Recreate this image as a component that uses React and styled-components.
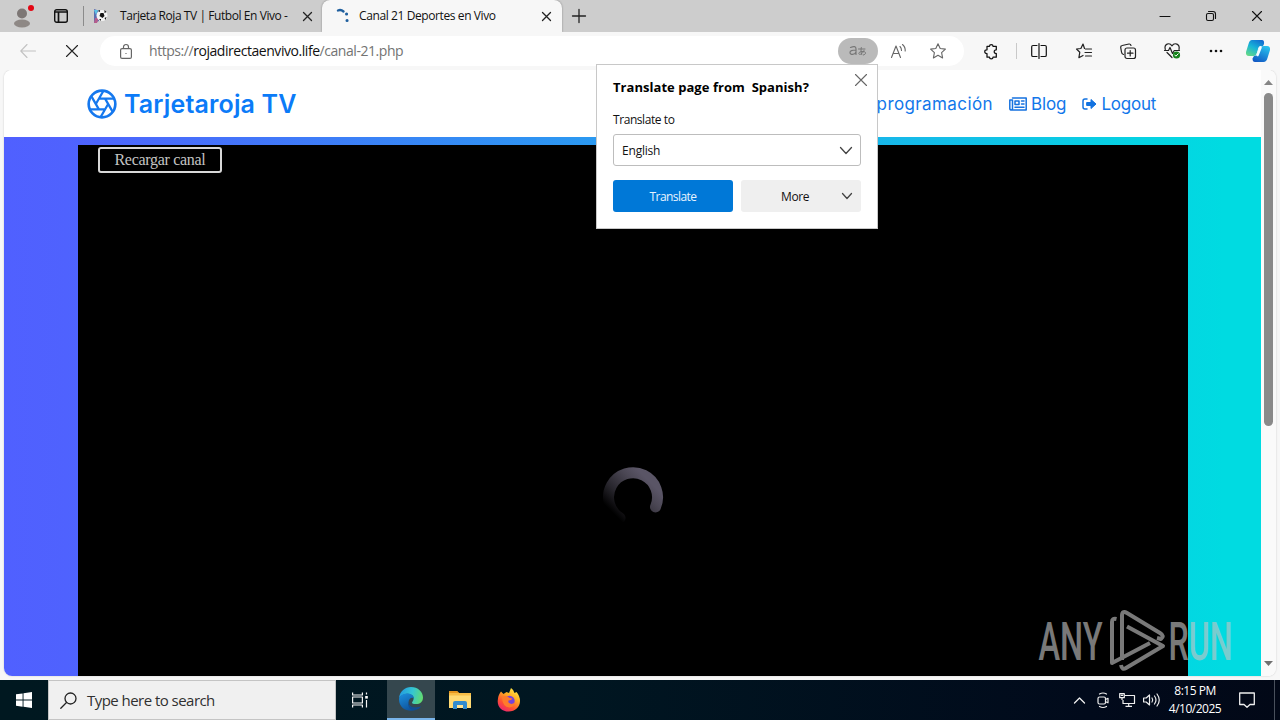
import React from 'react';
import styled, { createGlobalStyle } from 'styled-components';

const GlobalStyle = createGlobalStyle`
  * { box-sizing: border-box; }
  body {
    margin: 0;
    overflow: hidden;
    background: #f7f7f7;
    font-family: "Open Sans", "Noto Sans", sans-serif;
  }
  svg { display: block; flex: none; overflow: visible; }
`;

const Screen = styled.div`
  position: relative;
  width: 1280px;
  height: 720px;
  display: flex;
  flex-direction: column;
  overflow: hidden;
`;

/* Tab strip */

const TabStrip = styled.div`
  height: 32px;
  flex: none;
  display: flex;
  background: #cdcdcd;
`;

const StripCell = styled.div`
  width: ${props => props.$w}px;
  display: flex;
  align-items: center;
  justify-content: center;
`;

const AccountCell = styled(StripCell)`
  padding-top: 2px;
`;

const StripDivider = styled.div`
  width: 1px;
  height: 20px;
  margin: 6px 0 0 4px;
  background: #8b8b8b;
`;

const Tab = styled.div`
  width: ${props => props.$w}px;
  height: 32px;
  padding: 0 ${props => props.$right}px 0 ${props => props.$left}px;
  display: flex;
  align-items: center;
  background: ${props => (props.$active ? '#f7f7f7' : 'transparent')};
  border-radius: 8px 8px 0 0;
  box-shadow: ${props => (props.$active ? '0 0 2px rgba(0,0,0,0.4)' : 'none')};
`;

const TabTitle = styled.div`
  flex: 1;
  margin-left: ${props => props.$gap}px;
  font-size: 12px;
  line-height: 32px;
  letter-spacing: ${props => props.$spacing}px;
  color: #111;
  white-space: nowrap;
`;

const WindowControls = styled.div`
  margin-left: auto;
  display: flex;
`;

/* Toolbar */

const Toolbar = styled.div`
  position: relative;
  height: 38px;
  flex: none;
  display: flex;
  align-items: center;
  padding-left: 6px;
  background: #f7f7f7;
`;

const ToolSlot = styled.div`
  width: ${props => props.$w || 44}px;
  height: 30px;
  margin-left: ${props => props.$gap || 0}px;
  display: flex;
  align-items: center;
  justify-content: center;
`;

const ToolDivider = styled.div`
  width: 1px;
  height: 16px;
  margin-left: 3px;
  background: #c9c9c9;
`;

const AddressBar = styled.div`
  width: 864px;
  height: 30px;
  margin: 0 5px 0 6px;
  padding: 0 6px 0 18px;
  display: flex;
  align-items: center;
  background: #fff;
  border-radius: 15px;
`;

const Url = styled.div`
  flex: 1;
  margin-left: 15px;
  font-size: 14px;
  line-height: 28px;
  letter-spacing: -0.45px;
  color: #737373;
  white-space: nowrap;
  span { color: #111; }
`;

const TranslateBadge = styled.div`
  width: 40px;
  height: 26px;
  display: flex;
  align-items: center;
  justify-content: center;
  border-radius: 13px;
  background: #bababa;
`;

/* Page */

const Frame = styled.div`
  width: 1272px;
  height: 606px;
  flex: none;
  margin: 0 4px 4px;
  display: flex;
  border-radius: 8px;
  overflow: hidden;
  background: #fff;
  box-shadow: 0 0 2px rgba(0,0,0,0.2);
`;

const Site = styled.div`
  width: 1257px;
  display: flex;
  flex-direction: column;
`;

const SiteHeader = styled.header`
  height: 67px;
  flex: none;
  display: flex;
  align-items: center;
  padding: 0 105px 0 82px;
  background: #fff;
  color: #0b7bf8;
  font-family: Inter, "Open Sans", sans-serif;
`;

const Brand = styled.div`
  margin-left: 6px;
  font-size: 25px;
  line-height: 30px;
  font-weight: 600;
  letter-spacing: 0.15px;
  white-space: nowrap;
`;

const Nav = styled.nav`
  margin-left: auto;
  display: flex;
  align-items: center;
`;

const NavLink = styled.div`
  display: flex;
  align-items: center;
  gap: 4px;
  margin-left: 16px;
  font-size: 17px;
  letter-spacing: ${props => props.$spacing}px;
  color: #1277ea;
  white-space: nowrap;
`;

const Stage = styled.main`
  flex: 1;
  display: flex;
  padding: 8px 73px 0 74px;
  background: linear-gradient(90deg, #5060ff 0%, #4f62fe 5%, #00dbe1 97%);
`;

const Player = styled.div`
  position: relative;
  flex: 1;
  background: #000;
`;

const ReloadButton = styled.div`
  width: 124px;
  height: 26px;
  margin: 2px 0 0 20px;
  border: 2px solid #d8d8d8;
  border-radius: 3px;
  text-align: center;
  font-family: "Liberation Serif", serif;
  font-size: 16px;
  line-height: 22px;
  letter-spacing: -0.3px;
  color: #c4c4c4;
`;

const Loader = styled.div`
  position: absolute;
  left: 525px;
  top: 322px;
`;

const Scrollbar = styled.div`
  width: 15px;
  display: flex;
  flex-direction: column;
  align-items: center;
  padding: 9px 0;
  background: #fafafa;
`;

const Thumb = styled.div`
  width: 9px;
  height: 333px;
  margin: 7px 0 auto;
  border-radius: 5px;
  background: #8a8a8a;
`;

/* Translate popup */

const Popup = styled.div`
  position: absolute;
  left: 596px;
  top: 64px;
  width: 282px;
  height: 165px;
  padding: 15px 16px 16px;
  border: 1px solid #c8c8c8;
  background: #fff;
  color: #111;
  font-size: 12px;
`;

const PopupHead = styled.div`
  height: 32px;
  display: flex;
  justify-content: space-between;
  font-size: 13px;
  line-height: 15px;
  font-weight: 700;
  letter-spacing: 0.04px;
  color: #000;
  svg { margin: -6px -6px 0 0; }
`;

const FieldLabel = styled.div`
  height: 22px;
  line-height: 16px;
  letter-spacing: -0.43px;
`;

const SelectBox = styled.div`
  height: 32px;
  display: flex;
  align-items: center;
  justify-content: space-between;
  padding: 0 8px;
  border: 1px solid #bdbdbd;
  border-radius: 3px;
  letter-spacing: -0.2px;
`;

const PopupActions = styled.div`
  display: flex;
  gap: 8px;
  margin-top: 14px;
`;

const PopupButton = styled.div`
  width: 120px;
  height: 32px;
  display: flex;
  align-items: center;
  justify-content: ${props => (props.$primary ? 'center' : 'space-between')};
  padding: ${props => (props.$primary ? '0' : '0 9px 0 40px')};
  border-radius: 3px;
  letter-spacing: ${props => (props.$primary ? -0.55 : -0.35)}px;
  background: ${props => (props.$primary ? '#0078d7' : '#efefef')};
  color: ${props => (props.$primary ? '#e8f4ff' : '#111')};
`;

/* Taskbar */

const Taskbar = styled.div`
  height: 40px;
  flex: none;
  display: flex;
  background: linear-gradient(90deg, #001820 0%, #001621 45%, #010a1b 85%, #020817 100%);
`;

const TaskCell = styled.div`
  width: ${props => props.$w}px;
  height: 40px;
  display: flex;
  align-items: center;
  justify-content: center;
  background: ${props => (props.$active ? '#35474e' : 'transparent')};
  border-bottom: ${props => (props.$active ? '2px solid #79b5ea' : 'none')};
`;

const TaskViewCell = styled(TaskCell)`
  padding-right: 4px;
`;

const SearchBox = styled.div`
  width: 288px;
  height: 40px;
  display: flex;
  align-items: center;
  padding-left: 11px;
  gap: 10px;
  border: 1px solid #c4c4c4;
  background: #f0f0f0;
  font-size: 15px;
  letter-spacing: -0.54px;
  color: #303030;
`;

const Tray = styled.div`
  margin-left: auto;
  display: flex;
  align-items: center;
  padding-right: 5px;
`;

const Clock = styled.div`
  width: 64px;
  text-align: center;
  font-size: 12px;
  line-height: 18px;
  letter-spacing: -0.5px;
  color: #fff;
  white-space: nowrap;
`;

const PeekLine = styled.div`
  width: 1px;
  height: 40px;
  background: #49505c;
`;

const Watermark = styled.div`
  position: absolute;
  left: 1036px;
  top: 606px;
  opacity: 0.62;
`;

const Svg = ({ w = 16, h = w, sw = 1.1, color = '#222', children }) => (
  <svg width={w} height={h} viewBox={`0 0 ${w} ${h}`} fill="none" stroke={color} strokeWidth={sw} strokeLinecap="round" strokeLinejoin="round">
    {children}
  </svg>
);

const Cross = ({ size, sw, color }) => (
  <Svg w={size} sw={sw} color={color}>
    <path d={`M.5.5 ${size - 0.5} ${size - 0.5}M${size - 0.5}.5.5 ${size - 0.5}`} />
  </Svg>
);

const Chevron = ({ w, h }) => (
  <Svg w={w} h={h} sw={1.3} color="#444"><path d={`M.5.5 ${w / 2} ${h - 0.5} ${w - 0.5}.5`} /></Svg>
);

const App = () => (
  <>
    <GlobalStyle />
    <Screen>
      <TabStrip>
        <AccountCell $w={44}>
          <Svg w={20} h={24} color="none">
            <circle cx="10" cy="8.500" r="5" fill="#7d7775" />
            <ellipse cx="10" cy="18.5" rx="8" ry="4" fill="#8e8885" />
            <circle cx="19" cy="3" r="3" fill="#e30613" />
          </Svg>
        </AccountCell>
        <StripCell $w={33}>
          <Svg w={14} sw={1.4} color="#111">
            <rect x=".7" y=".7" width="12.6" height="12.6" rx="2" />
            <path d="M1 3h12M4.5 3v10" strokeWidth="1.7" />
          </Svg>
        </StripCell>
        <StripCell $w={2} />
        <StripDivider />
        <Tab $w={238} $left={10} $right={10}>
          <Svg w={14} color="none">
            <path d="M0 0 6 2 5 12 0 14z" fill="#5a6fb0" />
            <path d="M0 1h4L2 6z" fill="#5cc4e6" />
            <path d="M1 9h4l-2 5H0z" fill="#b65d8c" />
            <circle cx="8" cy="6.5" r="5.5" fill="#f5f5f5" />
            <path d="m6.500 4 3 0 1 3-2 2-3-2zM10.500 1l2 2-2 1zM4 2l2-1v2zM10.500 9l2-1-1 3zM5 10l2 0 0 2z" fill="#151515" />
          </Svg>
          <TabTitle $gap={12} $spacing={-0.43}>Tarjeta Roja TV | Futbol En Vivo -</TabTitle>
          <Cross size={9} sw={1.3} />
        </Tab>
        <Tab $active $w={240} $left={14} $right={11}>
          <Svg w={14} sw={2.4} color="#1f5f9e">
            <path d="M2 1.5q3-1.2 5.500 1" />
            <path d="M10.500 5h.1M11 11.500h.1" strokeWidth="3" />
          </Svg>
          <TabTitle $gap={9} $spacing={-0.4}>Canal 21 Deportes en Vivo</TabTitle>
          <Cross size={9} sw={1.3} />
        </Tab>
        <StripCell $w={34}>
          <Svg w={14} sw={1.3}><path d="M7 .5v13M.5 7h13" /></Svg>
        </StripCell>
        <WindowControls>
          <StripCell $w={46}><Svg w={10} color="#111"><path d="M0 5.500h10" /></Svg></StripCell>
          <StripCell $w={46}>
            <Svg w={10} color="#111">
              <rect x=".5" y="2.500" width="7" height="7" rx="1.500" />
              <path d="M2.500 .5h4.500q2.500 0 2.500 2.500v4.500" />
            </Svg>
          </StripCell>
          <StripCell $w={46}><Cross size={10} sw={1.1} color="#111" /></StripCell>
        </WindowControls>
      </TabStrip>

      <Toolbar>
        <ToolSlot>
          <Svg w={16} color="#c2c2c2"><path d="M15.500 8H.8M7 1.500.8 8 7 14.500" /></Svg>
        </ToolSlot>
        <ToolSlot><Cross size={12} sw={1.1} color="#222" /></ToolSlot>
        <AddressBar>
          <ToolSlot $w={16}>
            <Svg w={12} h={15} color="#666" sw={1.2}>
              <rect x=".6" y="4.600" width="10.800" height="9.800" rx="1.500" />
              <path d="M3.500 4.500V3a2.500 2.500 0 0 1 5 0v1.500M5.900 9.500h.2" />
            </Svg>
          </ToolSlot>
          <Url>https://<span>rojadirectaenvivo.life</span>/canal-21.php</Url>
          <TranslateBadge>
            <Svg w={18} h={12} color="#777" sw={1.2}>
              <path d="M1.500 2.500Q7 0 7 4V9.500M7 5C3 5 1 5.700 1 7.500c0 2.800 5 2.500 6-.5" />
              <path d="M9.500 4h6.500M12.300 2.500c-.5 2.500-.4 4.500.4 7M15 5.500c-1 3.500-5 5-5.200 3C9.600 6.300 16.500 5.500 16.500 8c0 1.200-1 1.700-2.200 2" strokeWidth="1" />
            </Svg>
          </TranslateBadge>
          <ToolSlot $w={40}>
            <Svg w={15} h={14} color="#666">
              <path d="M.5 13.500 5 2l4.500 11.500M2.100 9.500h5.800" />
              <path d="M9 2.500q1.500 1.500 1.500 4M11.500 .5q3 2.500 2.700 6.500" />
            </Svg>
          </ToolSlot>
          <ToolSlot $w={40}>
            <Svg w={16} color="#666"><path d="m8 .8 2.200 4.700 5.200.6-3.800 3.600 1 5.200L8 12.300l-4.600 2.600 1-5.200L.6 6.100l5.200-.6z" /></Svg>
          </ToolSlot>
        </AddressBar>
        <ToolSlot>
          <Svg w={14} h={15} sw={1.25} color="#111">
            <path d="M3 2.300h2.500c0-2.300 3.500-2.300 3.500 0h3.300v3.500c-2.800-.2-2.800 3.900 0 3.700v3.700H9c0 2.300-3.500 2.300-3.500 0H3V9.500C0 9.700 0 5.600 3 5.800z" />
          </Svg>
        </ToolSlot>
        <ToolDivider />
        <ToolSlot>
          <Svg w={16} sw={1.2} color="#111"><path d="M6 2.500H2q-1.300 0-1.300 1.300v8.400q0 1.300 1.300 1.300h4M10 2.500h4q1.300 0 1.300 1.300v8.400q0 1.300-1.300 1.300h-4M8 .5v15" /></Svg>
        </ToolSlot>
        <ToolSlot $gap={1}>
          <Svg w={16} sw={1.2}>
            <path d="M8.500 5.500 7 1 4.900 5.500.5 6l3.300 3.200-.9 5.500L7 12.500M9.500 6H15.500M9 9.500h6.500M9.500 13h6" />
          </Svg>
        </ToolSlot>
        <ToolSlot>
          <Svg w={16} sw={1.2}>
            <path d="M3.500 11.500q-1.800-.5-2-2.500L.7 4.500q-.2-1.700 1.500-2L9 1q1.500-.2 2 1.500" />
            <rect x="5" y="5" width="10.500" height="10.500" rx="2" />
            <path d="M10.200 7.500v5.500M7.500 10.200H13" />
          </Svg>
        </ToolSlot>
        <ToolSlot>
          <Svg w={17} h={16} sw={1.2}>
            <path d="M1.300 6.500C-.2 1 5.300-1 8 2.800c2.600-3.800 8.200-1.800 7 3.700M.5 7.500h4l1.500-3 2.500 6 1.800-3h5.200M3 9.500l5 5" />
            <circle cx="12.500" cy="12" r="3.600" fill="#16831b" stroke="none" />
            <path d="m10.800 12 1.100 1.200 2.300-2.400" stroke="#fff" strokeWidth="1" />
          </Svg>
        </ToolSlot>
        <ToolSlot>
          <Svg w={14} h={4} color="none">
            <circle cx="2" cy="2" r="1.300" fill="#111" /><circle cx="7" cy="2" r="1.300" fill="#111" /><circle cx="12" cy="2" r="1.300" fill="#111" />
          </Svg>
        </ToolSlot>
        <ToolSlot $w={40}>
          <Svg w={24} h={22} color="none">
            <defs>
              <linearGradient id="cpA" x1=".8" y1="0" x2=".2" y2="1"><stop stopColor="#126cd1" /><stop offset=".5" stopColor="#18b4d8" /><stop offset="1" stopColor="#62d889" /></linearGradient>
              <linearGradient id="cpB" x1=".7" y1="0" x2=".2" y2="1"><stop stopColor="#27c0ed" /><stop offset="1" stopColor="#1157c3" /></linearGradient>
            </defs>
            <path d="M6 0h10q2.500 0 2 4l-1 2h-2q-2.500 0-3 3l-1 4q-1 3-3.500 3H3q-3.500 0-3-4L2.500 4Q3.500 0 6 0z" fill="url(#cpA)" />
            <path d="M18 6h3q3.500 0 3 4l-2.500 8q-1 4-4 4H9q-2.500 0-2.500-3.500L8 16q2.500 0 3.500-3l1.500-4q1-3 5-3z" fill="url(#cpB)" />
            <path d="M14.500 7.500 11.500 15" stroke="#f4fbff" strokeWidth="2.600" />
          </Svg>
        </ToolSlot>
      </Toolbar>

      <Frame>
        <Site>
          <SiteHeader>
            <svg width="32" height="32" viewBox="0 0 24 24" fill="none" stroke="#1578ee" strokeWidth="2">
              <circle cx="12" cy="12" r="10" />
              <path d="m14.310 8 5.740 9.940M9.690 8h11.480M7.380 12l5.740-9.940M9.690 16 3.950 6.060M14.310 16H2.830M16.620 12l-5.740 9.940" strokeWidth="1.700" />
            </svg>
            <Brand>Tarjetaroja TV</Brand>
            <Nav>
              <NavLink $spacing={0.4}>programación</NavLink>
              <NavLink $spacing={-0.1}>
                <Svg w={18} h={14} color="#1672df" sw={1.500}>
                  <path d="M3.500 1h13.700v12H2.500Q.8 13 .8 11.500V3h2.700v8.500q0 1.500-1.200 1.500" />
                  <path d="M6 4h4v3.500H6zM12.500 4H15M12.500 7H15M6 10.300h9" />
                </Svg>
                Blog
              </NavLink>
              <NavLink $spacing={-0.25}>
                <Svg w={15} h={12} color="#1272e0" sw={1.500}>
                  <path d="M5 1H3Q1 1 1 3v6q0 2 2 2h2" />
                  <path d="M5 4.500h4V1.500L14 6l-5 4.500v-3H5z" fill="#1272e0" strokeWidth="1" />
                </Svg>
                Logout
              </NavLink>
            </Nav>
          </SiteHeader>
          <Stage>
            <Player>
              <ReloadButton>Recargar canal</ReloadButton>
              <Loader>
                <svg width="60" height="60" viewBox="0 0 60 60">
                  <defs>
                    <linearGradient id="arc" gradientUnits="userSpaceOnUse" x1="14" y1="50" x2="48" y2="16">
                      <stop stopColor="#000" /><stop offset=".35" stopColor="#27252c" /><stop offset=".75" stopColor="#4a4653" /><stop offset="1" stopColor="#5a5566" />
                    </linearGradient>
                  </defs>
                  <path d="M17 51A24.500 24.500 0 1 1 52.500 40" fill="none" stroke="url(#arc)" strokeWidth="11" strokeLinecap="round" />
                </svg>
              </Loader>
            </Player>
          </Stage>
        </Site>
        <Scrollbar>
          <Svg w={9} h={7} color="none"><path d="M0 6 4.500 1 9 6z" fill="#858585" /></Svg>
          <Thumb />
          <Svg w={9} h={7} color="none"><path d="M0 1 4.500 6 9 1z" fill="#707070" /></Svg>
        </Scrollbar>
      </Frame>

      <Taskbar>
        <TaskCell $w={48}>
          <Svg w={16} color="none">
            <path d="M0 2.300 6.600 1.400V7.600H0zM7.500 1.200 16 0V7.600H7.500zM0 8.500h6.600v6.200L0 13.800zM7.500 8.500H16V16l-8.500-1.200z" fill="#fff" />
          </Svg>
        </TaskCell>
        <SearchBox>
          <Svg w={17} color="#222" sw={1.300}><circle cx="10.500" cy="6.500" r="5.500" /><path d="M6.500 10.500.8 16.200" /></Svg>
          Type here to search
        </SearchBox>
        <TaskViewCell $w={51}>
          <Svg w={16} color="#f4f4f4" sw={1.200}>
            <path d="M.6 .5v2.500h9.800V.5M.6 15.500V13h9.800v2.500M.6 5h9.800v6H.6zM14.500 .5v2M14.500 8v7.500" strokeLinecap="butt" />
            <path d="M13.200 4h2.600v2.600h-2.600z" fill="#fff" stroke="none" />
          </Svg>
        </TaskViewCell>
        <TaskCell $active $w={48}>
          <Svg w={24} color="none">
            <defs>
              <linearGradient id="edgeTop" x1="0" y1=".5" x2="1" y2=".7"><stop stopColor="#239ce0" /><stop offset=".5" stopColor="#35c6d2" /><stop offset="1" stopColor="#65dc69" /></linearGradient>
              <linearGradient id="edgeLow" x1="0" y1="0" x2=".6" y2="1"><stop stopColor="#1c91e0" /><stop offset="1" stopColor="#0d4e96" /></linearGradient>
            </defs>
            <path d="M0 11C1 4 6 0 12 0c7 0 12 5 12 10.500 0 5-4 7-8 6.500-3 0-3.500-1.500-2.400-2.500C17 10 12 6 7 7c-3 .5-5.500 2-7 4z" fill="url(#edgeTop)" />
            <path d="M0 12C.5 8 5 6.500 8.500 6.500c4 0 6.500 2.500 6.500 5-2-2-5.500 0-5.500 4 0 4.500 5 7 12.500 4C17 26 0 26 0 12z" fill="url(#edgeLow)" />
            <path d="M9.500 14c-.8 5 5 8.500 12.500 5.500-4 5.500-15 4.500-12.500-5.500z" fill="#124d91" />
          </Svg>
        </TaskCell>
        <TaskCell $w={49}>
          <Svg w={22} h={18} color="none">
            <path d="M0 0h8l2 2h12v15H0z" fill="#f7bd46" />
            <path d="M0 0h8l2 2H0z" fill="#e5961e" />
            <path d="M0 4.500h22V17H0z" fill="#ffda73" />
            <path d="M4 18v-6q0-2 2-2h10q2 0 2 2v6h-4v-4H8v4z" fill="#2f8bd0" />
            <path d="M8 14h6v3H8z" fill="#ffe494" />
          </Svg>
        </TaskCell>
        <TaskCell $w={49}>
          <Svg w={24} color="none">
            <defs>
              <linearGradient id="fox" x1=".8" y1="0" x2=".2" y2="1"><stop stopColor="#fff04a" /><stop offset=".35" stopColor="#ffae24" /><stop offset=".7" stopColor="#ff5131" /><stop offset="1" stopColor="#e92077" /></linearGradient>
            </defs>
            <path d="M4 3.500 6.500 6l3-2L12 5l2-5q3 2 3.500 5l2-1q3.500 4 3.500 9c0 6-5 10.500-11.300 10.500C5 23.500.5 19 .7 13Q1 7 4 3.500z" fill="url(#fox)" />
            <circle cx="12.500" cy="13" r="5.200" fill="#7443dc" />
            <path d="M5 9.500q4-3 7.500.5l3 .5q-1 2-4 2-1 3 3 3.500 3-.5 3-2 .5 5-5 5.500Q5.500 19 5 9.500z" fill="#ff7b2b" />
          </Svg>
        </TaskCell>
        <Tray>
          <TaskCell $w={24}><Svg w={11} h={7} color="#eee" sw={1.300}><path d="M.5 6 5.500 1l5 5" /></Svg></TaskCell>
          <TaskCell $w={24}>
            <Svg w={12} h={16} color="#eee" sw={1.200}>
              <rect x="1" y="5" width="7.500" height="7" rx="1.500" /><path d="m8.500 7.500 2.500-1.200v4.500L8.500 9.700M2.500 2q3.500-2 7 0M2.500 14.500q3.500 2 7 0" />
            </Svg>
          </TaskCell>
          <TaskCell $w={24}>
            <Svg w={16} h={14} color="#eee" sw={1.200}>
              <path d="M6 2.500h9.500v8H4V7M9.700 10.500V13M6.500 13.300h6.500M.7 .7h4.600v4H.7zM3 4.700V7M1.800 2.400h2.400" strokeLinecap="butt" />
            </Svg>
          </TaskCell>
          <TaskCell $w={24}>
            <Svg w={17} h={14} color="#eee" sw={1.200}>
              <path d="M.6 5h2.600L6.500 2v10L3.200 9H.6zM9 5q1.500 2 0 4M11.500 3q3 4 0 8M14 1q4.500 6 0 12" />
            </Svg>
          </TaskCell>
          <Clock>8:15 PM<br />4/10/2025</Clock>
          <TaskCell $w={40}>
            <Svg w={16} color="#eee" sw={1.300}><path d="M.7 1h14.600v11.500H11L8 15.300 5 12.500H.7z" /></Svg>
          </TaskCell>
          <TaskCell $w={7} />
          <PeekLine />
        </Tray>
      </Taskbar>

      <Popup>
        <PopupHead>
          Translate page from&nbsp; Spanish?
          <Cross size={12} sw={1.100} color="#666" />
        </PopupHead>
        <FieldLabel>Translate to</FieldLabel>
        <SelectBox>English<Chevron w={12} h={7} /></SelectBox>
        <PopupActions>
          <PopupButton $primary>Translate</PopupButton>
          <PopupButton>More<Chevron w={10} h={6} /></PopupButton>
        </PopupActions>
      </Popup>

      <Watermark>
        <svg width="198" height="70" viewBox="0 0 198 70" fontFamily="Roboto, sans-serif" fontSize="53" fontWeight="500" fill="#c4c4c4">
          <text x="2.500" y="53.500" textLength="64" lengthAdjust="spacingAndGlyphs">ANY</text>
          <text x="132.500" y="53.500" textLength="64" lengthAdjust="spacingAndGlyphs">RUN</text>
          <g fill="none" stroke="#c4c4c4" strokeWidth="4" strokeLinejoin="round">
            <path d="M80.500 13Q76 12 76 16V57L114 37" />
            <path d="M86 54V10Q86 4 91 7L124 27Q129 30 125 33L121 32" />
            <path d="M91 20.500 127 40 90 62Q86 64.500 85 59" />
          </g>
        </svg>
      </Watermark>
    </Screen>
  </>
);

export default App;
